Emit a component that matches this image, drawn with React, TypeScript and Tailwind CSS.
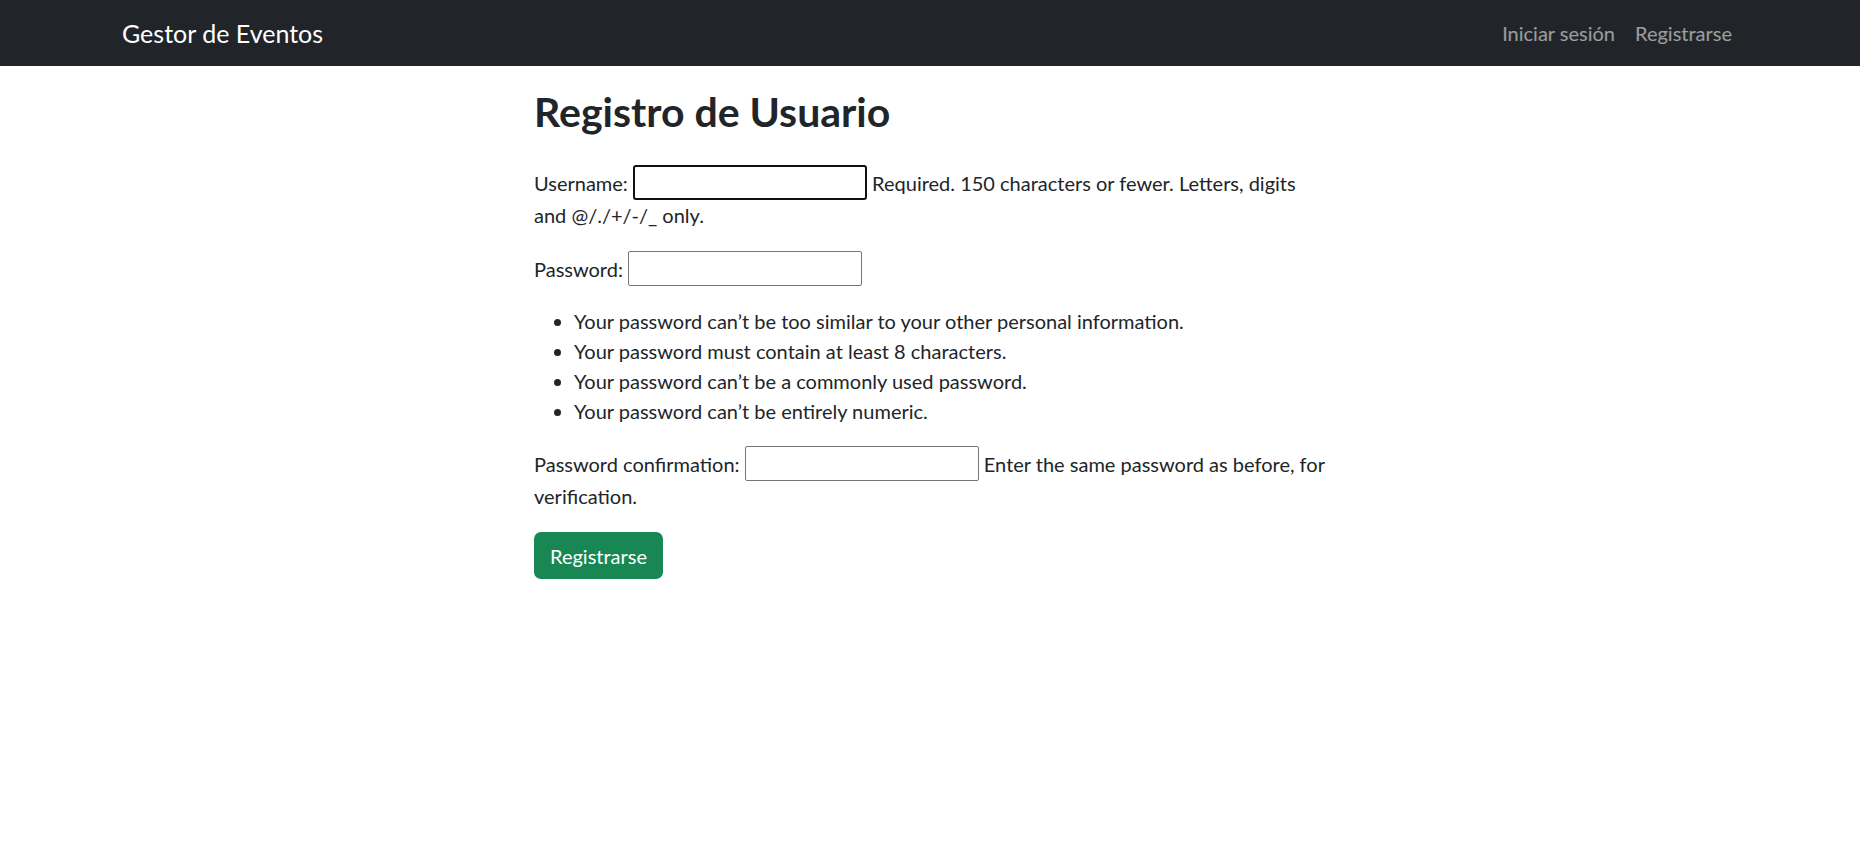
import React from 'react';

const passwordRules = [
    'Your password can’t be too similar to your other personal information.',
    'Your password must contain at least 8 characters.',
    'Your password can’t be a commonly used password.',
    'Your password can’t be entirely numeric.',
];

function Navbar() {
    return (
        <nav className="h-[66px] bg-[#212529] px-[120px] flex items-center justify-between">
            <a href="#" className="pl-[2px] text-white text-[25px] leading-[38px]">
                Gestor de Eventos
            </a>
            <div className="flex items-center">
                <a href="#" className="px-[10px] text-white/55 text-[20px] leading-[30px]">
                    Iniciar sesión
                </a>
                <a href="#" className="pl-[10px] pr-[8px] text-white/55 text-[20px] leading-[30px]">
                    Registrarse
                </a>
            </div>
        </nav>
    );
}

export default function App() {
    return (
        <div className="min-h-screen bg-white font-['Lato',sans-serif] text-[#212529] text-[20px] leading-[30px]">
            <Navbar />
            <main className="mx-auto w-[800px] pl-[4px] pt-[22px]">
                <h2 className="text-[41px] leading-[48px] font-bold mb-[29px]">Registro de Usuario</h2>
                <form>
                    <p className="mb-[21px]">
                        <label htmlFor="id_username">Username:</label>{' '}
                        <input
                            id="id_username"
                            type="text"
                            className="w-[234px] h-[35px] border-2 border-[#101010] rounded-[3px] bg-white px-[2px] outline-none"
                        />{' '}
                        <span>Required. 150 characters or fewer. Letters, digits and @/./+/-/_ only.</span>
                    </p>
                    <p className="mb-[20px]">
                        <label htmlFor="id_password1">Password:</label>{' '}
                        <input
                            id="id_password1"
                            type="password"
                            className="w-[234px] h-[35px] border border-[#767676] rounded-[2px] bg-white px-[2px] outline-none"
                        />
                    </p>
                    <ul className="list-disc pl-[40px] mt-[3px] mb-[20px]">
                        {passwordRules.map((rule) => (
                            <li key={rule}>{rule}</li>
                        ))}
                    </ul>
                    <p className="mb-[20px]">
                        <label htmlFor="id_password2">Password confirmation:</label>{' '}
                        <input
                            id="id_password2"
                            type="password"
                            className="w-[234px] h-[35px] border border-[#767676] rounded-[2px] bg-white px-[2px] outline-none"
                        />{' '}
                        <span>Enter the same password as before, for verification.</span>
                    </p>
                    <button
                        type="submit"
                        className="mt-[1px] h-[47px] px-[16px] rounded-[7px] bg-[#198754] text-white leading-[30px]"
                    >
                        Registrarse
                    </button>
                </form>
            </main>
        </div>
    );
}
